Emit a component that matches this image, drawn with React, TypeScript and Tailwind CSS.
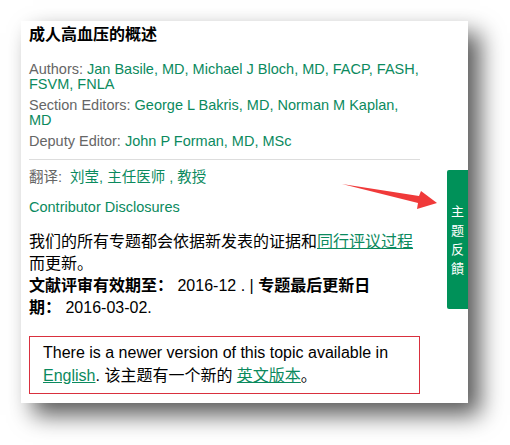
export default function App() {
  const sans = "font-['Liberation_Sans','Noto_Sans_CJK_SC',sans-serif]";
  return (
    <div className={`relative h-[445px] w-[510px] bg-white ${sans}`}>
      <div className="pl-[21px] pt-[21px]">
        {/* Topic card */}
        <div className="relative w-[447px] bg-white pl-[8px] pr-[47px] pt-[4px] pb-[9px] shadow-[12px_12px_22px_rgba(0,0,0,0.65)]">
          <h1 className="text-[16px] font-bold leading-[20px] text-black">成人高血压的概述</h1>

          <div className="mt-[17px] text-[14.5px] leading-[15px] text-[#666]">
            <p className="mb-[6px]">
              Authors: <span className="text-[#0b8a5e]">Jan Basile, MD, Michael J Bloch, MD, FACP, FASH, FSVM, FNLA</span>
            </p>
            <p className="mb-[6px]">
              Section Editors: <span className="text-[#0b8a5e]">George L Bakris, MD, Norman M Kaplan, MD</span>
            </p>
            <p>
              Deputy Editor: <span className="text-[#0b8a5e]">John P Forman, MD, MSc</span>
            </p>
          </div>

          <div className="mt-[10px] h-px w-[391px] bg-[#ddd]" />

          <p className="mt-[10px] text-[14.5px] leading-[15px] text-[#666]">
            翻译:&nbsp; <span className="text-[#0b8a5e]">刘莹, 主任医师 , 教授</span>
          </p>

          <p className="mt-[15px] text-[14.5px] leading-[15px] text-[#0b8a5e]">Contributor Disclosures</p>

          <p className="mt-[16px] w-[388px] text-[16px] leading-[22px] text-black">
            我们的所有专题都会依据新发表的证据和<span className="text-[#0b8a5e] underline">同行评议过程</span>而更新。
            <br />
            <b>文献评审有效期至：</b> 2016-12 . | <b>专题最后更新日</b>
            <br />
            <b>期：</b> 2016-03-02.
          </p>

          <div className="mt-[17px] w-[391px] border border-[#d9303e] pl-[13px] pt-[4px] pb-[6px] text-[16px] leading-[23px] text-black">
            There is a newer version of this topic available in{' '}
            <span className="text-[#0b8a5e] underline">English</span>. 该主题有一个新的{' '}
            <span className="text-[#0b8a5e] underline">英文版本</span>。
          </div>

          {/* Feedback tab */}
          <div className="absolute right-0 top-[149px] flex h-[139px] w-[21px] flex-col items-center justify-center rounded-l-[2px] bg-[#009159] text-[13px] leading-[19px] text-white">
            <span>主</span>
            <span>题</span>
            <span>反</span>
            <span>饋</span>
          </div>
        </div>
      </div>

      {/* Annotation arrow */}
      <svg className="absolute left-0 top-0" width="510" height="445" viewBox="0 0 510 445">
        <polygon
          points="342,184 419,196 421,191 437,203 417,209 418,203"
          fill="#f03a3a"
        />
      </svg>
    </div>
  );
}
